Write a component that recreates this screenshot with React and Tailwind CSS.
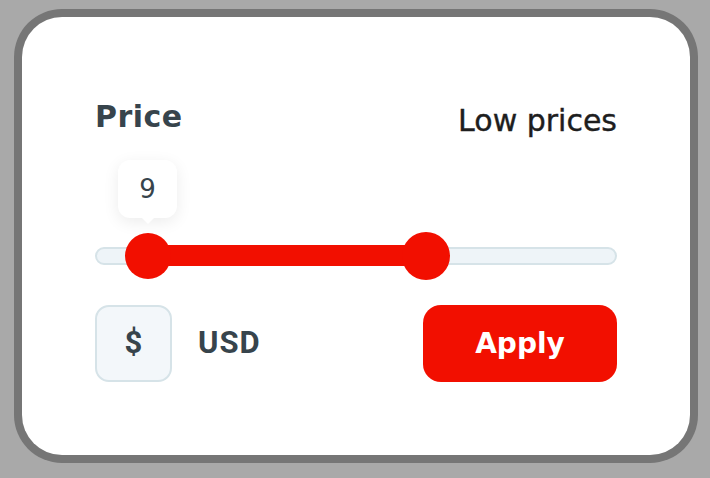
export default function App() {
  return (
    <div className="w-[710px] h-[478px] bg-[#a9a9a9] pt-[17px] pl-[22px]" style={{ fontFamily: "'DejaVu Sans', sans-serif" }}>
      <div className="w-[668px] h-[438px] bg-white rounded-[40px] shadow-[0_0_0_8px_#767676] px-[73px] pt-[81px]">
        <div className="flex items-end justify-between h-[34px]">
          <div className="text-[30px] leading-none font-bold text-[#37444c] tracking-[0.5px]">Price</div>
          <div className="text-[30px] leading-none text-[#1e1e1e] mb-[-4px] [-webkit-text-stroke:0.4px_#1e1e1e]">Low prices</div>
        </div>
        <div className="relative mt-[100px] h-[48px] flex items-center">
          <div className="w-full h-[18px] rounded-full bg-[#eef4f8] border-2 border-[#d6e3e8]"></div>
          <div className="absolute left-[53px] w-[278px] top-[13px] h-[21px] bg-[#f20f00]"></div>
          <div className="absolute left-[30px] top-[1px] w-[46px] h-[46px] rounded-full bg-[#f20f00]"></div>
          <div className="absolute left-[307px] top-0 w-[48px] h-[48px] rounded-full bg-[#f20f00]"></div>
          <div className="absolute left-[23px] top-[-72px] w-[59px] h-[58px] rounded-[12px] bg-white shadow-[0_4px_16px_rgba(0,0,0,0.08)] flex items-center justify-center text-[26px] text-[#37444c]">
            9
            <div className="absolute bottom-[-6px] left-1/2 -translate-x-1/2 w-0 h-0 border-l-[7px] border-r-[7px] border-t-[7px] border-l-transparent border-r-transparent border-t-white"></div>
          </div>
        </div>
        <div className="flex items-center justify-between mt-[25px]">
          <div className="flex items-center">
            <div className="w-[77px] h-[77px] rounded-[14px] bg-[#f3f7fa] border-2 border-[#d6e3e8] flex items-center justify-center text-[31px] font-bold text-[#37444c]" style={{ fontFamily: "Roboto, sans-serif" }}>$</div>
            <div className="ml-[26px] text-[31px] font-bold text-[#37444c] tracking-[1px]" style={{ fontFamily: "Roboto, sans-serif" }}>USD</div>
          </div>
          <div className="w-[194px] h-[77px] rounded-[18px] bg-[#f20f00] flex items-center justify-center text-white text-[28px] font-bold">Apply</div>
        </div>
      </div>
    </div>
  );
}
